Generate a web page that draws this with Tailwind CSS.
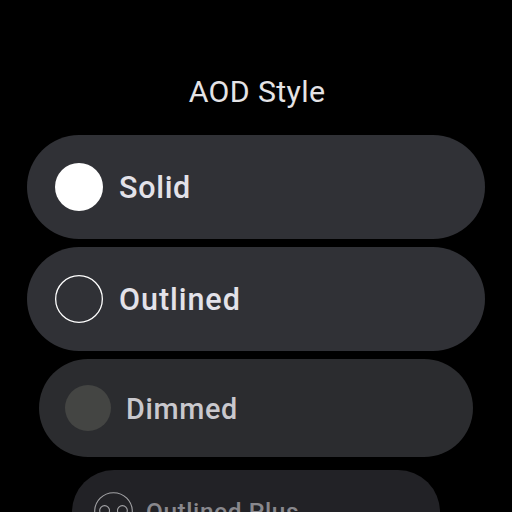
<!DOCTYPE html>
<html lang="en">
<head>
<meta charset="utf-8">
<title>AOD Style</title>
<script src="https://cdn.jsdelivr.net/npm/@tailwindcss/browser@4"></script>
</head>
<body class="bg-black">
<main class="flex h-[512px] w-[512px] flex-col items-center overflow-hidden bg-black font-[Roboto,sans-serif] whitespace-nowrap">
  <h1 class="mt-[72px] h-[40px] shrink-0 pl-[2px] text-[30.3px] leading-[40px] font-normal tracking-[0.35px] text-[#e4e3e5]">AOD Style</h1>
  <button class="mt-[23px] flex h-[104px] w-[458px] shrink-0 items-center rounded-full bg-[#303136] pl-[28px] text-left">
    <span class="size-[48px] rounded-full bg-white"></span>
    <span class="ml-[16px] pt-[2px] text-[30.5px] leading-[40px] font-medium tracking-[0.7px] text-[#e3e2e9]">Solid</span>
  </button>
  <button class="mt-[8px] flex h-[104px] w-[458px] shrink-0 items-center rounded-full bg-[#303136] pl-[28px] text-left">
    <svg class="size-[48px] shrink-0" viewBox="0 0 48 48" fill="none" stroke="#fff" stroke-width="1.3">
      <circle cx="24" cy="24" r="23.35"/>
    </svg>
    <span class="ml-[16px] pt-[2px] text-[30.5px] leading-[40px] font-medium tracking-[0.95px] text-[#e3e2e9]">Outlined</span>
  </button>
  <button class="mt-[8px] flex h-[98px] w-[434px] shrink-0 items-center rounded-full bg-[#2b2c2f] pl-[26px] text-left">
    <span class="size-[46px] rounded-full bg-[#444543]"></span>
    <span class="ml-[15px] pt-[2px] text-[28.8px] leading-[38px] font-medium tracking-[0.65px] text-[#c9c8cd]">Dimmed</span>
  </button>
  <button class="mt-[12.5px] flex h-[84px] w-[368px] shrink-0 items-center rounded-full bg-[#222226] pl-[22px] text-left">
    <svg class="size-[39px] shrink-0" viewBox="0 0 39 39" fill="none" stroke="#a3a3a6" stroke-width="1.1">
      <circle cx="19.5" cy="19.5" r="18.8"/>
      <circle cx="10.6" cy="18.5" r="4.9"/>
      <circle cx="28.4" cy="18.5" r="4.9"/>
    </svg>
    <span class="ml-[13px] text-[24.4px] leading-[32px] font-medium tracking-[0.6px] text-[#89888d]">Outlined Plus</span>
  </button>
</main>
</body>
</html>
